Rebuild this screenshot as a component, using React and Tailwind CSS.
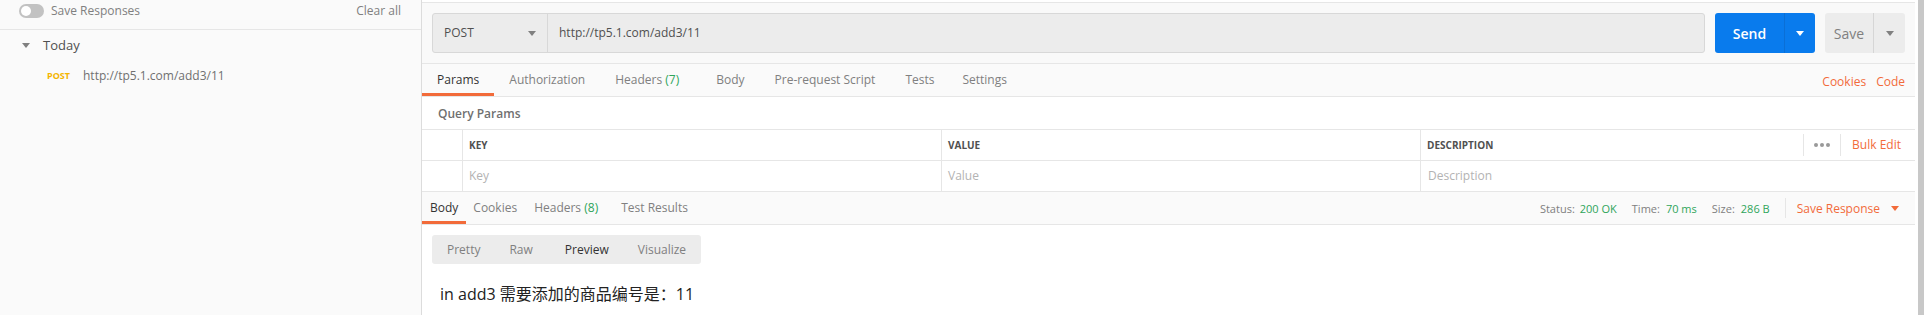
import React from "react";

const font = "font-['Open_Sans','Noto_Sans_CJK_SC',sans-serif]";

const Caret = ({ color = "#808080", className = "" }) => (
  <svg width="8" height="5" viewBox="0 0 8 5" className={className}>
    <path d="M0 0 L8 0 L4 5 Z" fill={color} />
  </svg>
);

const Sidebar = () => (
  <aside className="w-[422px] shrink-0 bg-[#fafafa] border-r border-[#dcdcdc] flex flex-col">
    <div className="h-[30px] border-b border-[#e6e6e6] pb-[8px] pl-[19px] pr-[20px] flex items-center justify-between">
      <div className="flex items-center gap-[7px]">
        <div className="w-[25px] h-[14px] rounded-full bg-[#c2c2c2] flex items-center pl-[2px]">
          <div className="w-[10px] h-[10px] rounded-full bg-white" />
        </div>
        <span className="text-[12px] text-[#808080]">Save Responses</span>
      </div>
      <span className="text-[12px] text-[#808080]">Clear all</span>
    </div>
    <div className="h-[30px] flex items-center pl-[22px] gap-[13px] pt-[1px]">
      <Caret color="#808080" />
      <span className="text-[13px] text-[#505050]">Today</span>
    </div>
    <div className="h-[30px] flex items-center pl-[47px] gap-[13px] pt-[1px]">
      <span className="text-[9px] font-bold text-[#f4b400] w-[23px]">POST</span>
      <span className="text-[12px] text-[#707070]">http://tp5.1.com/add3/11</span>
    </div>
  </aside>
);

const Tab = ({ label, active, count, className = "" }) => (
  <div
    className={`h-full flex items-center border-b-[3px] ${
      active ? "border-[#f26b3a] text-[#333333]" : "border-transparent text-[#808080]"
    } ${className}`}
  >
    <span className="text-[12px] pt-[3px]">
      {label}
      {count && <span className="text-[#2fa55a]"> ({count})</span>}
    </span>
  </div>
);

const UrlBar = () => (
  <div className="h-[62px] bg-[#f9f9f9] border-y border-[#e6e6e6] flex items-center px-[10px] gap-[10px]">
    <div className="flex-1 h-[40px] flex bg-[#ececec] border border-[#d8d8d8] rounded-[3px]">
      <div className="w-[115px] shrink-0 border-r border-[#d8d8d8] flex items-center justify-between pl-[11px] pr-[11px]">
        <span className="text-[12px] text-[#505050]">POST</span>
        <Caret />
      </div>
      <div className="flex items-center pl-[11px]">
        <span className="text-[12px] text-[#505050]">http://tp5.1.com/add3/11</span>
      </div>
    </div>
    <div className="w-[100px] h-[40px] flex bg-[#097bed] rounded-[3px]">
      <div className="w-[70px] border-r border-[#0a6fd6] flex items-center justify-center">
        <span className="text-[14px] font-semibold text-white">Send</span>
      </div>
      <div className="flex-1 flex items-center justify-center">
        <Caret color="#ffffff" />
      </div>
    </div>
    <div className="w-[80px] h-[40px] flex bg-[#ececec] rounded-[3px]">
      <div className="w-[49px] border-r border-[#d6d6d6] flex items-center justify-center">
        <span className="text-[14px] text-[#808080]">Save</span>
      </div>
      <div className="flex-1 flex items-center justify-center">
        <Caret />
      </div>
    </div>
  </div>
);

const RequestTabs = () => (
  <div className="h-[33px] bg-[#fafafa] border-b border-[#e6e6e6] flex items-center pr-[10px]">
    <Tab label="Params" active className="px-[15px]" />
    <Tab label="Authorization" className="px-[15px]" />
    <Tab label="Headers" count="7" className="px-[15px]" />
    <Tab label="Body" className="px-[15px] ml-[7px]" />
    <Tab label="Pre-request Script" className="px-[15px]" />
    <Tab label="Tests" className="px-[15px]" />
    <Tab label="Settings" className="px-[13px]" />
    <div className="flex-1" />
    <span className="text-[12px] text-[#f26b3a] pt-[3px]">Cookies</span>
    <span className="text-[12px] text-[#f26b3a] pt-[3px] ml-[10px]">Code</span>
  </div>
);

const ParamsTable = () => (
  <div className="border-t border-[#e6e6e6]">
    <div className="grid grid-cols-[41px_479px_479px_1fr] h-[31px] border-b border-[#e6e6e6]">
      <div className="border-r border-[#e6e6e6]" />
      <div className="border-r border-[#e6e6e6] flex items-center pl-[6px]">
        <span className="text-[10px] font-bold text-[#505050]">KEY</span>
      </div>
      <div className="border-r border-[#e6e6e6] flex items-center pl-[6px]">
        <span className="text-[10px] font-bold text-[#505050]">VALUE</span>
      </div>
      <div className="flex items-center pl-[6px]">
        <span className="text-[10px] font-bold text-[#505050]">DESCRIPTION</span>
        <div className="flex-1" />
        <div className="h-[22px] border-l border-[#e6e6e6] w-[37px] flex items-center justify-center gap-[2px]">
          <span className="w-[4px] h-[4px] rounded-full bg-[#999999]" />
          <span className="w-[4px] h-[4px] rounded-full bg-[#999999]" />
          <span className="w-[4px] h-[4px] rounded-full bg-[#999999]" />
        </div>
        <div className="h-[22px] border-l border-[#e6e6e6] flex items-center pl-[11px] pr-[14px]">
          <span className="text-[12px] text-[#f26b3a]">Bulk Edit</span>
        </div>
      </div>
    </div>
    <div className="grid grid-cols-[41px_479px_479px_1fr] h-[31px] border-b border-[#e6e6e6]">
      <div className="border-r border-[#e6e6e6]" />
      <div className="border-r border-[#e6e6e6] flex items-center pl-[6px]">
        <span className="text-[12px] text-[#b3b3b3]">Key</span>
      </div>
      <div className="border-r border-[#e6e6e6] flex items-center pl-[6px]">
        <span className="text-[12px] text-[#b3b3b3]">Value</span>
      </div>
      <div className="flex items-center pl-[7px]">
        <span className="text-[12px] text-[#b3b3b3]">Description</span>
      </div>
    </div>
  </div>
);

const ResponseBar = () => (
  <div className="h-[33px] bg-[#fafafa] border-b border-[#e6e6e6] flex items-center pr-[16px]">
    <Tab label="Body" active className="px-[8px]" />
    <Tab label="Cookies" className="ml-[7px]" />
    <Tab label="Headers" count="8" className="ml-[17px]" />
    <Tab label="Test Results" className="ml-[23px]" />
    <div className="flex-1" />
    <div className="flex items-center text-[11px] pt-[2px]">
      <span className="text-[#808080]">Status:</span>
      <span className="text-[#2fa55a] ml-[5px]">200 OK</span>
      <span className="text-[#808080] ml-[15px]">Time:</span>
      <span className="text-[#2fa55a] ml-[6px]">70 ms</span>
      <span className="text-[#808080] ml-[15px]">Size:</span>
      <span className="text-[#2fa55a] ml-[6px]">286 B</span>
    </div>
    <div className="h-[20px] border-l border-[#e6e6e6] ml-[15px] pl-[11px] flex items-center gap-[11px]">
      <span className="text-[12px] text-[#f26b3a] pt-[2px]">Save Response</span>
      <Caret color="#f26b3a" />
    </div>
  </div>
);

const ResponseBody = () => (
  <div className="pl-[10px] pt-[10px]">
    <div className="w-[269px] h-[29px] bg-[#ececec] rounded-[3px] flex items-center text-[12px] text-[#808080]">
      <span className="ml-[15px]">Pretty</span>
      <span className="ml-[29px]">Raw</span>
      <span className="ml-[32px] text-[#333333]">Preview</span>
      <span className="ml-[29px]">Visualize</span>
    </div>
    <p className="mt-[19px] pl-[8px] text-[16px] leading-[22px] text-[#222222]">
      in add3 需要添加的商品编号是：11
    </p>
  </div>
);

export default function App() {
  return (
    <div className={`flex w-[1927px] h-[315px] bg-white overflow-hidden ${font}`}>
      <Sidebar />
      <main className="w-[1493px] shrink-0 flex flex-col">
        <div className="h-[2px] bg-white" />
        <UrlBar />
        <RequestTabs />
        <div className="h-[32px] flex items-center pl-[16px] pt-[1px]">
          <span className="text-[12px] font-semibold text-[#707070]">Query Params</span>
        </div>
        <ParamsTable />
        <ResponseBar />
        <ResponseBody />
      </main>
      <div className="w-[3px] shrink-0" />
      <div className="w-[6px] shrink-0 bg-[#c8c8c8]" />
      <div className="w-[3px] shrink-0" />
    </div>
  );
}
